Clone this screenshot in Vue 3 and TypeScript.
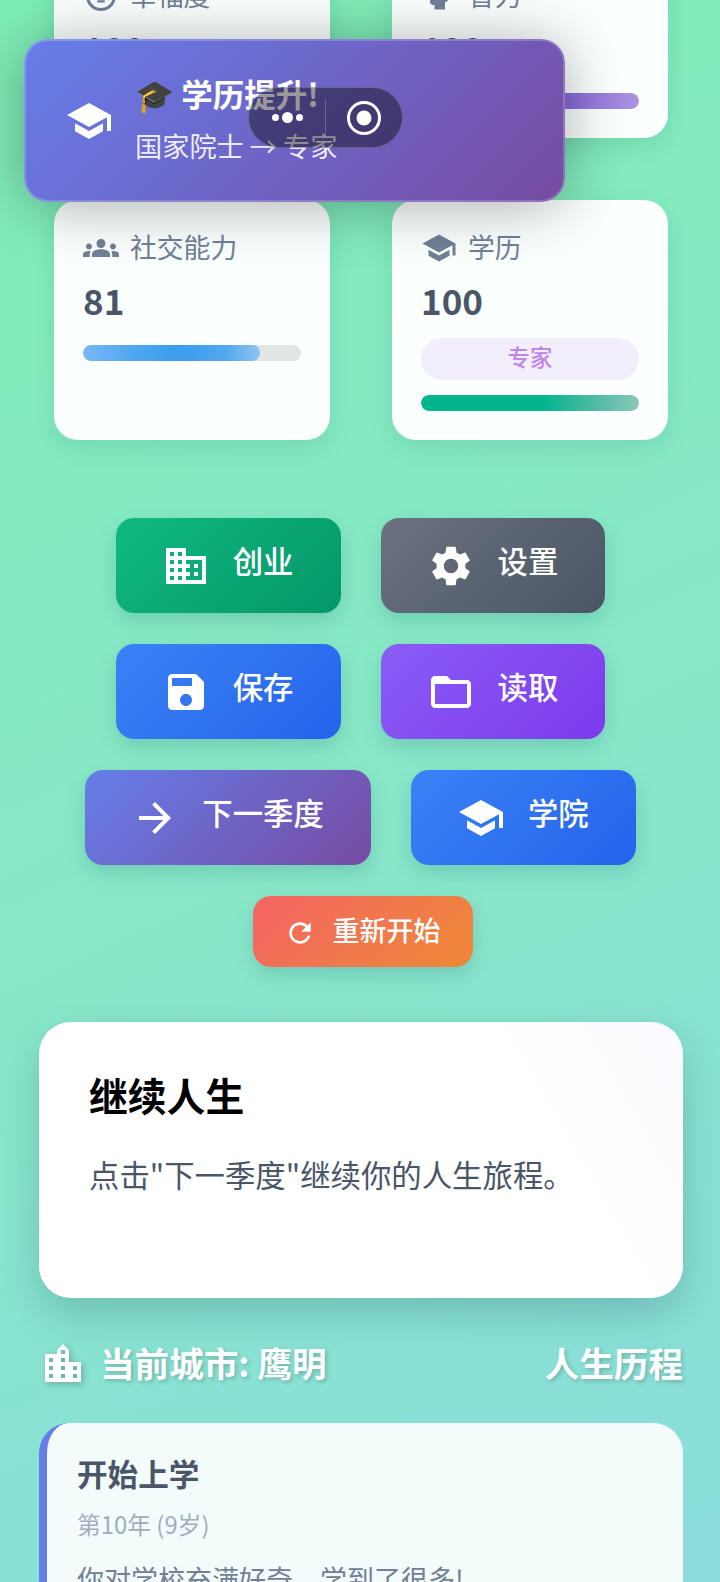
<script setup lang="ts">
interface Btn { label: string; cls: string; icon: string }
const paths: Record<string, string> = {
  school: 'M5 13.18v4L12 21l7-3.82v-4L12 17l-7-3.82zM12 3L1 9l11 6 9-4.91V17h2V9L12 3z',
  groups: 'M12 12.75c1.63 0 3.07.39 4.24.9 1.08.48 1.76 1.56 1.76 2.73V18H6v-1.61c0-1.18.68-2.26 1.76-2.73 1.17-.52 2.61-.91 4.24-.91zM4 13c1.1 0 2-.9 2-2s-.9-2-2-2-2 .9-2 2 .9 2 2 2zm1.13 1.1c-.37-.06-.74-.1-1.13-.1-.99 0-1.93.21-2.78.58C.48 14.9 0 15.62 0 16.43V18h4.5v-1.61c0-.83.23-1.61.63-2.29zM20 13c1.1 0 2-.9 2-2s-.9-2-2-2-2 .9-2 2 .9 2 2 2zm4 3.43c0-.81-.48-1.53-1.22-1.85-.85-.37-1.79-.58-2.78-.58-.39 0-.76.04-1.13.1.4.68.63 1.46.63 2.29V18H24v-1.57zM12 6c1.66 0 3 1.34 3 3s-1.34 3-3 3-3-1.34-3-3 1.34-3 3-3z',
  business: 'M12 7V3H2v18h20V7H12zM6 19H4v-2h2v2zm0-4H4v-2h2v2zm0-4H4V9h2v2zm0-4H4V5h2v2zm4 12H8v-2h2v2zm0-4H8v-2h2v2zm0-4H8V9h2v2zm0-4H8V5h2v2zm10 12h-8v-2h2v-2h-2v-2h2v-2h-2V9h8v10zm-2-8h-2v2h2v-2zm0 4h-2v2h2v-2z',
  settings: 'M19.14 12.94c.04-.3.06-.61.06-.94 0-.32-.02-.64-.07-.94l2.03-1.58c.18-.14.23-.41.12-.61l-1.92-3.32c-.12-.22-.37-.29-.59-.22l-2.39.96c-.5-.38-1.03-.7-1.62-.94l-.36-2.54c-.04-.24-.24-.41-.48-.41h-3.84c-.24 0-.43.17-.47.41l-.36 2.54c-.59.24-1.13.57-1.62.94l-2.39-.96c-.22-.08-.47 0-.59.22L2.74 8.87c-.12.21-.08.47.12.61l2.03 1.58c-.05.3-.09.63-.09.94s.02.64.07.94l-2.03 1.58c-.18.14-.23.41-.12.61l1.92 3.32c.12.22.37.29.59.22l2.39-.96c.5.38 1.03.7 1.62.94l.36 2.54c.05.24.24.41.48.41h3.84c.24 0 .44-.17.47-.41l.36-2.54c.59-.24 1.13-.56 1.62-.94l2.39.96c.22.08.47 0 .59-.22l1.92-3.32c.12-.22.07-.47-.12-.61l-2.01-1.58zM12 15.6c-1.98 0-3.6-1.62-3.6-3.6s1.62-3.6 3.6-3.6 3.6 1.62 3.6 3.6-1.62 3.6-3.6 3.6z',
  save: 'M17 3H5c-1.11 0-2 .9-2 2v14c0 1.1.89 2 2 2h14c1.1 0 2-.9 2-2V7l-4-4zm-5 16c-1.66 0-3-1.34-3-3s1.34-3 3-3 3 1.34 3 3-1.34 3-3 3zm3-10H5V5h10v4z',
  folder: 'M20 6h-8l-2-2H4c-1.1 0-1.99.9-1.99 2L2 18c0 1.1.9 2 2 2h16c1.1 0 2-.9 2-2V8c0-1.1-.9-2-2-2zm0 12H4V8h16v10z',
  arrow: 'M12 4l-1.41 1.41L16.17 11H4v2h12.17l-5.58 5.59L12 20l8-8z',
  refresh: 'M17.65 6.35C16.2 4.9 14.21 4 12 4c-4.42 0-7.99 3.58-7.99 8s3.57 8 7.99 8c3.73 0 6.84-2.55 7.73-6h-2.08c-.82 2.33-3.04 4-5.65 4-3.31 0-6-2.69-6-6s2.69-6 6-6c1.66 0 3.14.69 4.22 1.78L13 11h7V4l-2.35 2.35z',
  city: 'M15 11V5l-3-3-3 3v2H3v14h18V11h-6zm-8 8H5v-2h2v2zm0-4H5v-2h2v2zm0-4H5V9h2v2zm6 8h-2v-2h2v2zm0-4h-2v-2h2v2zm0-4h-2V9h2v2zm0-4h-2V5h2v2zm6 12h-2v-2h2v2zm0-4h-2v-2h2v2z',
  smile: 'M11.99 2C6.47 2 2 6.48 2 12s4.47 10 9.99 10C17.52 22 22 17.52 22 12S17.52 2 11.99 2zM12 20c-4.42 0-8-3.58-8-8s3.58-8 8-8 8 3.58 8 8-3.58 8-8 8zM9.5 14.8h5v1.5h-5z',
  brain: 'M13 3C9.25 3 6.2 5.94 6.02 9.64L4.1 12.2c-.25.33-.01.8.4.8H6v3c0 1.1.9 2 2 2h1v3h7v-4.68c2.36-1.12 4-3.53 4-6.32 0-3.87-3.13-7-7-7z'
}
const rows: Btn[][] = [
  [{ label: '创业', cls: 'green', icon: 'business' }, { label: '设置', cls: 'gray', icon: 'settings' }],
  [{ label: '保存', cls: 'blue', icon: 'save' }, { label: '读取', cls: 'purple', icon: 'folder' }],
  [{ label: '下一季度', cls: 'next', icon: 'arrow' }, { label: '学院', cls: 'blue', icon: 'school' }]
]
</script>

<template>
  <div class="screen">
    <div class="page">
      <section class="stats">
        <div class="card">
          <div class="label"><svg class="ic" viewBox="0 0 24 24"><path :d="paths.smile" /></svg><span>幸福度</span></div>
          <div class="value">100</div>
          <div class="track"><div class="fill pink"></div></div>
        </div>
        <div class="card">
          <div class="label"><svg class="ic" viewBox="0 0 24 24"><path :d="paths.brain" /></svg><span>智力</span></div>
          <div class="value">100</div>
          <div class="track"><div class="fill violet"></div></div>
        </div>
        <div class="card">
          <div class="label"><svg class="ic" viewBox="0 0 24 24"><path :d="paths.groups" /></svg><span>社交能力</span></div>
          <div class="value">81</div>
          <div class="track"><div class="fill sky" :style="{ width: '81%' }"></div></div>
        </div>
        <div class="card">
          <div class="label"><svg class="ic" viewBox="0 0 24 24"><path :d="paths.school" /></svg><span>学历</span></div>
          <div class="value">100</div>
          <div class="badge">专家</div>
          <div class="track tight"><div class="fill teal"></div></div>
        </div>
      </section>

      <section class="actions">
        <div v-for="(row, i) in rows" :key="i" class="row">
          <button v-for="b in row" :key="b.label" class="btn" :class="b.cls">
            <svg viewBox="0 0 24 24"><path :d="paths[b.icon]" /></svg>
            <span>{{ b.label }}</span>
          </button>
        </div>
        <div class="row shifted">
          <button class="btn small restart">
            <svg viewBox="0 0 24 24"><path :d="paths.refresh" /></svg>
            <span>重新开始</span>
          </button>
        </div>
      </section>

      <section class="story">
        <h2>继续人生</h2>
        <p>点击"下一季度"继续你的人生旅程。</p>
      </section>

      <div class="heading">
        <div class="city"><svg viewBox="0 0 24 24"><path :d="paths.city" /></svg>当前城市: 鹰明</div>
        <div>人生历程</div>
      </div>

      <article class="event">
        <h3>开始上学</h3>
        <div class="when">第10年 (9岁)</div>
        <p>你对学校充满好奇，学到了很多!</p>
      </article>
    </div>

    <div class="toast">
      <svg viewBox="0 0 24 24"><path :d="paths.school" /></svg>
      <div class="toast-text">
        <div class="toast-title">🎓 学历提升!</div>
        <div class="toast-sub">国家院士 → 专家</div>
      </div>
    </div>

    <div class="capsule">
      <div class="cap-part">
        <i class="dot"></i><i class="dot big"></i><i class="dot"></i>
      </div>
      <div class="cap-line"></div>
      <div class="cap-part">
        <svg viewBox="0 0 36 36" width="36" height="36"><circle cx="18" cy="18" r="15.5" fill="none" stroke="#fff" stroke-width="3" /><circle cx="18" cy="18" r="7.5" fill="#fff" /></svg>
      </div>
    </div>
  </div>
</template>

<style>
body { margin: 0; }
</style>

<style scoped>
* { box-sizing: border-box; }
.screen {
  position: relative;
  width: 720px;
  height: 1582px;
  overflow: hidden;
  display: flow-root;
  background: linear-gradient(155deg, #7eeeb6 0%, #88e8c8 50%, #8adcdc 100%);
  font-family: "Noto Sans CJK SC", "Noto Sans", sans-serif;
}
.page { margin-top: -52px; padding: 0 37px 0 39px; }
.stats {
  display: grid;
  grid-template-columns: 1fr 1fr;
  gap: 62px;
  margin: 0 15px;
}
.card {
  background: rgba(255, 255, 255, 0.97);
  border-radius: 24px;
  padding: 29px;
  box-shadow: 0 8px 24px rgba(0, 80, 70, 0.12);
}
.label {
  display: flex;
  align-items: center;
  gap: 11px;
  height: 38px;
  font-size: 26.8px;
  color: #718096;
}
.label span { margin-bottom: 4px; }
.ic { width: 36px; height: 36px; fill: #718096; }
.value {
  margin-top: 9px;
  height: 48px;
  line-height: 48px;
  font-size: 35px;
  font-weight: 700;
  color: #4a5568;
}
.track {
  margin-top: 21px;
  height: 16px;
  border-radius: 8px;
  background: #e2e5e6;
  overflow: hidden;
}
.track.tight { margin-top: 15px; }
.fill { height: 100%; border-radius: 8px; width: 100%; }
.pink { background: linear-gradient(90deg, #ed64a6, #f6a5c9); }
.violet { background: linear-gradient(90deg, #6a50d0 0%, #7a5fd6 55%, #ab94e2 100%); }
.sky { background: linear-gradient(90deg, #77b8f7 0%, #4ea6f0 30%, #3c9cee 55%, #52a8ee 80%, #8cc4f2 100%); }
.teal { background: linear-gradient(90deg, #00b48c 0%, #00b48e 55%, #4fbca4 80%, #8ac8bb 100%); }
.badge {
  margin-top: 14px;
  height: 42px;
  line-height: 37px;
  border-radius: 21px;
  background: #f3eefc;
  color: #c084f0;
  font-size: 22.4px;
  font-weight: 500;
  text-align: center;
}
.actions { margin: 78px 1px 0 0; display: flex; flex-direction: column; gap: 31px; }
.row { display: flex; justify-content: center; gap: 40px; }
.shifted { padding-left: 4px; }
.btn {
  display: flex;
  align-items: center;
  gap: 23px;
  height: 95px;
  padding: 0 47px 0 46px;
  border: 0;
  border-radius: 18px;
  color: #fff;
  font-family: inherit;
  font-size: 30.4px;
  font-weight: 500;
  box-shadow: 0 8px 20px rgba(0, 60, 80, 0.16);
}
.btn svg { width: 48px; height: 48px; fill: #fff; flex: none; }
.btn span { line-height: 40px; margin-bottom: 12px; }
.btn.small { height: 71px; padding: 0 32px 0 31px; gap: 17px; font-size: 27px; }
.btn.small svg { width: 32px; height: 32px; margin-top: 2px; }
.btn.small span { margin-bottom: 4px; }
.green { background: linear-gradient(135deg, #10b981, #059669); }
.gray { background: linear-gradient(135deg, #6b7280, #4b5563); }
.blue { background: linear-gradient(135deg, #3b82f6, #2563eb); }
.purple { background: linear-gradient(135deg, #8b5cf6, #7c3aed); }
.next { background: linear-gradient(135deg, #667eea, #764ba2); }
.restart { background: linear-gradient(135deg, #f56565, #ed8936); }
.story {
  margin-top: 55px;
  height: 276px;
  padding: 47px 50px;
  border-radius: 32px;
  background: linear-gradient(60deg, #ffffff 0%, #ffffff 75%, #fafaff 100%);
  box-shadow: 0 16px 40px rgba(0, 50, 60, 0.2);
}
.story h2 { margin: 0; font-size: 38.8px; line-height: 50px; font-weight: 700; color: #000; }
.story p { margin: 33px 0 0; font-size: 30.4px; line-height: 44px; color: #4a5568; }
.heading {
  margin-top: 41px;
  height: 48px;
  padding-bottom: 2px;
  display: flex;
  justify-content: space-between;
  align-items: center;
  color: #fff;
  font-size: 34.6px;
  font-weight: 700;
  text-shadow: 2px 2px 4px rgba(0, 0, 0, 0.2);
}
.city { display: flex; align-items: center; gap: 13px; }
.city svg { width: 48px; height: 48px; margin-top: 4px; fill: #fff; filter: drop-shadow(2px 2px 3px rgba(0, 0, 0, 0.25)); }
.event {
  margin-top: 36px;
  height: 260px;
  padding: 30px 30px;
  border-left: 8px solid #667eea;
  border-radius: 30px;
  background: rgba(255, 255, 255, 0.9);
}
.event h3 { margin: 0; font-size: 30.6px; line-height: 40px; font-weight: 700; color: #4a5568; }
.when { margin-top: 14px; font-size: 23.8px; line-height: 34px; color: #a0aec0; }
.event p { margin: 19px 0 0; font-size: 27px; line-height: 38px; color: #718096; }
.toast {
  position: absolute;
  left: 24px;
  top: 39px;
  width: 541px;
  height: 163px;
  display: flex;
  align-items: center;
  gap: 22px;
  padding: 0 39px;
  border: 2px solid rgba(255, 255, 255, 0.2);
  border-radius: 24px;
  background: linear-gradient(135deg, #667eea, #764ba2);
  background-origin: border-box;
  box-shadow: 0 4px 60px rgba(0, 0, 0, 0.32);
  color: #fff;
}
.toast > svg { width: 48px; height: 48px; fill: #fff; flex: none; }
.toast-text { margin-bottom: 7px; }
.toast-title { font-size: 31.5px; line-height: 46px; font-weight: 700; }
.toast-sub { margin-top: 9px; font-size: 27.2px; line-height: 40px; color: rgba(255, 255, 255, 0.9); }
.capsule {
  position: absolute;
  left: 248px;
  top: 87px;
  width: 155px;
  height: 61px;
  display: flex;
  align-items: center;
  border: 1px solid rgba(255, 255, 255, 0.2);
  border-radius: 31px;
  background: rgba(0, 0, 0, 0.4);
}
.cap-part { flex: 1; display: flex; align-items: center; justify-content: center; gap: 3px; }
.cap-line { width: 1px; height: 38px; background: rgba(255, 255, 255, 0.22); }
.dot { display: block; width: 7px; height: 7px; border-radius: 50%; background: #fff; }
.dot.big { width: 11px; height: 11px; }
</style>
